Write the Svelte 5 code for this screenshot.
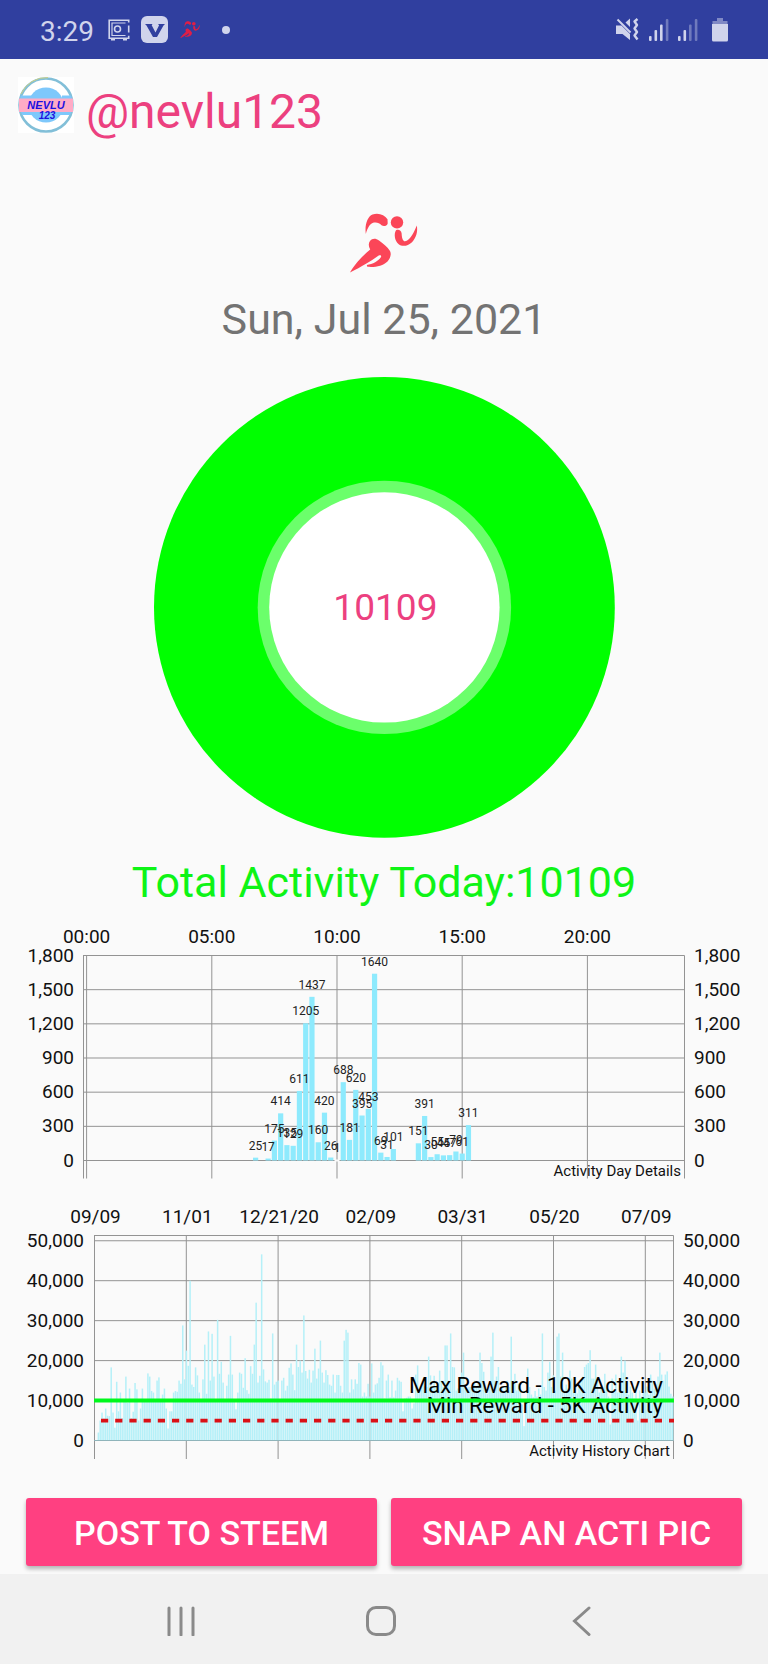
<script>
  // Day chart geometry: one slot is a quarter of an hour
  const dayLeft = 86.6;
  const dayStep = 6.26;
  const dayZero = 240.5;
  const dayY = (v) => dayZero - (v / 1800) * 205;
  const dayBars = [
    [27, 25], [29, 17], [30, 175], [31, 414], [32, 135], [33, 129], [34, 611],
    [35, 1205], [36, 1437], [37, 160], [38, 420], [39, 26], [40, 1], [41, 688],
    [42, 181], [43, 620], [44, 395], [45, 453], [46, 1640], [47, 69], [48, 31],
    [49, 101], [53, 151], [54, 391], [55, 30], [56, 55], [57, 45], [58, 47],
    [59, 79], [60, 61], [61, 311]
  ].map(([slot, value]) => ({ x: dayLeft + slot * dayStep, value }));
  const dayTicks = [0, 300, 600, 900, 1200, 1500, 1800];
  const hours = ['00:00', '05:00', '10:00', '15:00', '20:00'].map((label, i) => ({
    label,
    x: dayLeft + i * 125.2
  }));

  // History chart: thousands of steps for each day
  const histLeft = 94.5;
  const histZero = 240.5;
  const histY = (v) => histZero - v * 3.995;
  const history = [
    2, 5, 7, 5.5, 8, 6.2, 6.1, 18.3, 7, 3.2, 14.7, 7.3, 12, 5.6, 10, 16, 9.5, 13, 5.6, 7.2,
    14.4, 12.8, 5, 8, 13, 10, 10, 16.8, 16, 12.4, 12, 9.8, 15, 15.8, 9.7, 11.5, 13, 8, 3, 7.3,
    7.3, 12, 12.4, 12.2, 15, 14.2, 28.8, 15.3, 22.5, 18.7, 40, 14, 13.4, 18.3, 16.3, 12, 10, 15.3, 24, 11.7,
    27.3, 15, 26.7, 16, 10, 30.2, 16.7, 19.7, 14.5, 10, 13.7, 16.5, 26.2, 16.5, 10, 7.8, 12, 17, 16.7, 13.2,
    20.6, 12.6, 11.7, 18.6, 16.7, 24, 34.5, 14.5, 16.2, 46.6, 17.8, 14.8, 14.5, 15.2, 10.5, 26.8, 14, 14.7, 15, 10,
    15, 15.7, 12.5, 13.7, 18.2, 19.3, 16.5, 12.6, 24, 18.4, 20, 17, 31.3, 17.4, 15.5, 17.7, 14.5, 17.5, 23, 15.5,
    18, 25, 17, 14.5, 17.6, 16.4, 14, 13.7, 16.5, 12, 16.4, 16.4, 13.7, 12, 25, 27.7, 27, 12, 15.3, 12.8,
    15.3, 14.2, 19.4, 19, 11, 12, 11, 14.2, 11, 19.3, 12, 14, 14.3, 15.7, 19.6, 18.8, 10.5, 15, 16.5, 10.8,
    15, 10.8, 12.5, 15.7, 15, 14.7, 7.3, 10.5, 10.7, 11, 11, 8, 9.3, 16.5, 18.8, 12.5, 13.4, 14.6, 12.5, 13.4,
    21, 16.3, 13.4, 16.2, 13.4, 14.2, 17.5, 15, 13.4, 23.8, 23.8, 15, 26.8, 18.4, 18.3, 12.5, 13, 12.5, 17, 22,
    14, 12.5, 13.4, 13.4, 12.5, 15, 13.4, 14.2, 22, 19.4, 17.2, 12.5, 11.7, 13.4, 21, 27, 15, 16, 18.4, 12.5,
    13.4, 12.5, 13.4, 15, 13.4, 26, 13.4, 16.7, 12.5, 14.2, 13.4, 9, 3.6, 10, 18, 13.4, 11.5, 10.8, 12.4, 11,
    13, 11.5, 26.8, 13.4, 12.5, 17, 19.7, 13.4, 16.3, 12.5, 26, 26.8, 16, 22, 12.5, 14, 13, 17.5, 15.5, 12,
    13.5, 11.8, 13.4, 15, 16, 18.4, 19, 19.4, 22.6, 15.5, 15.5, 19, 15, 12, 13.4, 12, 16.7, 13, 11, 4,
    15.5, 12, 16.5, 12, 14, 21, 17, 20, 12.5, 11.5, 13.5, 12, 10.5, 13.5, 5, 12.5, 11, 14, 12, 13.5,
    11.5, 16.5, 15, 13, 14, 16, 22, 16.5, 15, 16.5, 17.3, 13.5, 11.7, 11
  ];
  const histTicks = [0, 10, 20, 30, 40, 50];
  const dates = ['09/09', '11/01', '12/21/20', '02/09', '03/31', '05/20', '07/09'].map((label, i) => ({
    label,
    x: histLeft + i * 91.8
  }));
  const fmt = (n) => n.toLocaleString('en-US');
</script>

{#snippet runner()}
  <svg viewBox="0 0 68 60" fill="currentColor" aria-hidden="true">
    <circle cx="47" cy="9.4" r="6.2" />
    <path d="M15.800 21C14.600 11.500 17.500 3.500 22.500 1.400c6-2 12 .2 15 4.800l.2 4.200c-.8 2.600-4.200 3.400-6.200 1.800-2-2.200-4.700-3.200-7.600-2.600-3.800.8-6.200 5-8.100 11.400z" />
    <path d="M46 17.200c2.600-1.300 5.200.2 5.600 3 .2 3 .4 6.200 2.500 8 3.500.8 8.500-4.700 12.700-15.600 1.200 5.800-.6 12.400-4.800 16.600-4.400 4.300-10.100 4.500-13.300 2-4.300-3.300-4.900-10.800-2.700-14z" />
    <path d="M0 59.500C3 54 8.500 46.500 20.200 36.500c-1.700-3-2-6-.2-8.500 2.200-2.700 5.500-3 9-.5 4.500 3.200 8.400 6.400 11 10.400 1.600 2.800.4 7.600-2.500 10.600-4.700 4.500-12.500 6-20.200 5.300l-.5-1.800c5.800-.8 11.800-4 14.200-8 .6-1.500-.6-2.200-2.300-1.400C20 49 12 53.500 0 59.500z" />
  </svg>
{/snippet}

<div class="screen">
  <header class="status">
    <span class="clock">3:29</span>
    <svg class="safe" viewBox="0 0 22 22" fill="none" stroke="currentColor" aria-hidden="true">
      <path d="M20.700 3.500V1.200H1.200v18h19.500v-2.500M20.700 6.500v7" stroke-width="1.600" />
      <path d="M17.500 4H4v12.500h13.500" stroke-width="1.200" />
      <circle cx="9.500" cy="10" r="3" stroke-width="1.600" />
      <path d="M3 20.500h4M15 20.500h4" stroke-width="1.800" />
    </svg>
    <svg class="badge" viewBox="0 0 27 27" aria-hidden="true">
      <rect width="27" height="27" rx="6" fill="currentColor" />
      <path d="M4 8h7.500l-.8 1.200 3.800 7.300 3.600-7.300L17 8h7l-1.500 1.500L16 21h-4L5.500 9.500z" fill="#303f9f" />
    </svg>
    <span class="mini">{@render runner()}</span>
    <span class="dot"></span>
    <svg class="mute" viewBox="0 0 23 23" fill="currentColor" aria-hidden="true">
      <path d="M0 7.500h5.500l8.500 8.500v6L6.500 16H0z" />
      <path d="M9.500 4.500L14 .5v8.500z" />
      <path d="M1.500 1.500l13 13" stroke="currentColor" stroke-width="2" />
      <path d="M21.500 1L18.500 3.500l2.500 3.500-2.500 3.500 2.500 3.500-2.500 3.500 3 4" fill="none" stroke="currentColor" stroke-width="2.400" stroke-linejoin="round" />
    </svg>
    <svg class="bars" viewBox="0 0 20 22" fill="currentColor" aria-hidden="true">
      <rect y="17" width="2.600" height="5" rx="1" /><rect x="5.500" y="11" width="2.600" height="11" rx="1" />
      <rect x="11" y="5.500" width="2.600" height="16.500" rx="1" /><rect x="16.800" width="2.600" height="22" rx="1" opacity=".4" />
    </svg>
    <svg class="bars" viewBox="0 0 20 22" fill="currentColor" aria-hidden="true">
      <rect y="17" width="2.600" height="5" rx="1" /><rect x="5.500" y="11" width="2.600" height="11" rx="1" />
      <rect x="11" y="5.500" width="2.600" height="16.500" rx="1" opacity=".4" /><rect x="16.800" width="2.600" height="22" rx="1" opacity=".4" />
    </svg>
    <svg class="battery" viewBox="0 0 16 24" fill="currentColor" aria-hidden="true">
      <path d="M5 0h6v3h4.500v3H.5V3H5z" opacity=".5" />
      <path d="M0 6h16v16q0 1.500-1.500 1.500h-13Q0 23.500 0 22z" />
    </svg>
  </header>

  <main>
    <div class="user">
      <svg class="avatar" viewBox="0 0 56 56" aria-label="NEVLU 123">
        <rect width="56" height="56" fill="#fff" />
        <circle cx="28" cy="28" r="26.500" fill="#fff" stroke="#82bfd8" stroke-width="2.600" />
        <path d="M3 17A27.500 27.500 0 0 1 30 .6" fill="none" stroke="#c9cf86" stroke-width="1" />
        <circle cx="28" cy="28" r="17.600" fill="#7ec8fb" />
        <path d="M3 18.500h11.500L12 22H2zM44 18.500h9L54 22H44zM2.500 34.500h11l2.500 3.500H4.500zM42 34.500h11.500L52 38H40z" fill="#7ec8fb" />
        <rect x="1" y="21.500" width="54" height="13.500" fill="#ffabc6" />
        <text x="28" y="32" class="logo">NEVLU</text>
        <text x="29" y="42" class="logo small">123</text>
      </svg>
      <span class="handle">@nevlu123</span>
    </div>

    <div class="runner">{@render runner()}</div>
    <div class="date">Sun, Jul 25, 2021</div>

    <svg class="donut" viewBox="0 0 460 460" role="img" aria-label="10109 steps">
      <circle cx="230" cy="230" r="230" fill="#0f0" />
      <circle cx="230" cy="230" r="126.500" fill="#fff" fill-opacity=".42" />
      <circle cx="230" cy="230" r="115" fill="#fff" />
      <text x="231" y="243">10109</text>
    </svg>

    <div class="total">Total Activity Today:10109</div>

    <svg class="chart" viewBox="0 0 768 270" role="img" aria-label="Activity Day Details">
      <g class="grid">
        {#each dayTicks as t}
          <path d="M83 {dayY(t)}H684.500" />
        {/each}
        {#each hours as h}
          <path d="M{h.x} 35.500V258.500" />
        {/each}
        <path d="M83.500 35.500V258.500M684.500 35.500V258.500" />
      </g>
      {#each dayBars as b}
        {#if b.value === 1}
          <rect x={b.x - 2.500} y="239.500" width="5" height="2" fill="#fafafa" />
        {:else}
          <rect x={b.x - 2.600} y={dayY(b.value)} width="5.200" height={dayZero - dayY(b.value)} fill="#8eeafd" />
        {/if}
      {/each}
      <g class="values">
        {#each dayBars as b}
          <text x={b.x} y={dayY(b.value) - 8}>{b.value}</text>
        {/each}
      </g>
      <g class="axis">
        {#each hours as h}
          <text x={h.x} y="23" class="mid">{h.label}</text>
        {/each}
        {#each dayTicks as t}
          <text x="74" y={dayY(t) + 6} class="end">{fmt(t)}</text>
          <text x="694" y={dayY(t) + 6}>{fmt(t)}</text>
        {/each}
      </g>
      <text x="681" y="256" class="caption">Activity Day Details</text>
    </svg>

    <svg class="chart" viewBox="0 0 768 270" role="img" aria-label="Activity History Chart">
      <g class="grid">
        {#each histTicks as t}
          <path d="M94 {histY(t)}H673.500" />
        {/each}
        {#each dates as d}
          <path d="M{d.x} 35.500V259" />
        {/each}
        <path d="M94 35.500H673.500V259" />
      </g>
      {#each history as v, i}
        <rect x={97.600 + i * 1.835} y={histY(v)} width="1.500" height={v * 3.995} fill="#b5f0f8" />
      {/each}
      <path d="M94 240.500H673.500" stroke="#8fb4ba" />
      <g class="limits">
        <text x="663" y="193">Max Reward - 10K Activity</text>
        <text x="663" y="213">Min Reward - 5K Activity</text>
      </g>
      <path d="M94 200.600H674" stroke="#00f81c" stroke-width="4" />
      <path d="M101 220.600H674" stroke="#db1016" stroke-width="3.600" stroke-dasharray="7.200 7" />
      <g class="axis">
        {#each dates as d}
          <text x={d.x + 1} y="23" class="mid">{d.label}</text>
        {/each}
        {#each histTicks as t}
          <text x="84" y={histY(t) + 6} class="end">{fmt(t * 1000)}</text>
          <text x="683" y={histY(t) + 6}>{fmt(t * 1000)}</text>
        {/each}
      </g>
      <text x="670" y="256" class="caption">Activity History Chart</text>
    </svg>

    <div class="actions">
      <button>POST TO STEEM</button>
      <button>SNAP AN ACTI PIC</button>
    </div>
  </main>

  <nav>
    <button aria-label="Recent apps">
      <svg viewBox="0 0 30 30"><path d="M3 2v27M15 2v27M27 2v27" /></svg>
    </button>
    <button aria-label="Home">
      <svg viewBox="0 0 30 30"><rect x="1.500" y="1.500" width="27" height="27" rx="8.500" /></svg>
    </button>
    <button aria-label="Back">
      <svg viewBox="0 0 30 30"><path d="M23 2L8.500 15 23 28.500" /></svg>
    </button>
  </nav>
</div>

<style>
  :global(body) {
    margin: 0;
    background: #fafafa;
  }
  .screen {
    display: flex;
    flex-direction: column;
    min-height: 100vh;
    background: #fafafa;
    font-family: Roboto, sans-serif;
  }
  svg {
    display: block;
    flex: none;
  }
  .status {
    display: flex;
    align-items: center;
    height: 59px;
    padding: 0 40px;
    background: #303f9f;
    color: #d0d4ec;
  }
  .clock {
    font-size: 28px;
    line-height: 32px;
    padding-top: 4px;
  }
  .safe {
    width: 22px;
    height: 22px;
    margin-left: 14px;
  }
  .badge {
    width: 27px;
    height: 27px;
    margin-left: 11px;
  }
  .mini {
    width: 20px;
    margin-left: 12px;
    color: #e01e46;
  }
  .dot {
    width: 8px;
    height: 8px;
    margin-left: 22px;
    border-radius: 50%;
    background: currentColor;
  }
  .mute {
    width: 23px;
    height: 23px;
    margin-left: auto;
  }
  .bars {
    width: 20px;
    height: 22px;
    margin-left: 9px;
  }
  .mute + .bars {
    margin-left: 10px;
  }
  .battery {
    width: 16px;
    height: 24px;
    margin-left: 14px;
  }
  main {
    display: flex;
    flex-direction: column;
    align-items: center;
  }
  .user {
    display: flex;
    align-self: stretch;
    gap: 12px;
    padding: 18px 18px 0;
  }
  .avatar {
    width: 56px;
    height: 56px;
  }
  .logo {
    font: italic bold 11px 'Liberation Sans', sans-serif;
    fill: #1c10e0;
    text-anchor: middle;
  }
  .small {
    font-size: 10px;
  }
  .handle {
    font-size: 48px;
    line-height: 70px;
    color: #ec407f;
  }
  .runner {
    width: 68px;
    margin-top: 66px;
    color: #fb4658;
  }
  .date,
  .total {
    font-size: 43px;
    line-height: 52px;
    text-align: center;
  }
  .date {
    margin-top: 20px;
    color: #737373;
  }
  .donut {
    width: 60%;
    margin-top: 32px;
    overflow: visible;
  }
  .donut text {
    font-size: 37px;
    fill: #ec407f;
    text-anchor: middle;
  }
  .total {
    margin-top: 18px;
    color: #0ef416;
  }
  .chart {
    width: 100%;
    margin-top: 10px;
  }
  .total + .chart {
    margin-top: 12px;
  }
  .grid path {
    fill: none;
    stroke: #939393;
    stroke-width: 1;
  }
  .axis text {
    font-size: 19px;
    fill: #111;
  }
  .axis .mid,
  .values text {
    text-anchor: middle;
  }
  .axis .end,
  .caption,
  .limits text {
    text-anchor: end;
  }
  .values text {
    font-size: 12px;
    fill: #222;
  }
  .caption {
    font-size: 15px;
    fill: #111;
  }
  .limits text {
    font-size: 22px;
    fill: #000;
  }
  .actions {
    display: grid;
    grid-template-columns: 1fr 1fr;
    gap: 14px;
    align-self: stretch;
    padding: 28px 26px 8px;
  }
  .actions button {
    height: 68px;
    padding: 2px 0 0;
    border: 0;
    border-radius: 3px;
    background: #ff4081;
    box-shadow: 0 3px 4px rgba(0, 0, 0, 0.28);
    color: #fff;
    font: 500 34px/40px Roboto, sans-serif;
    white-space: nowrap;
  }
  nav {
    display: grid;
    grid-template-columns: repeat(3, 1fr);
    height: 90px;
    margin-top: auto;
    padding: 0 87px 0 81px;
    background: #f1f1f1;
  }
  nav button {
    display: grid;
    place-items: center;
    padding: 4px 0 0;
    border: 0;
    background: none;
  }
  nav svg {
    width: 30px;
    height: 30px;
    fill: none;
    stroke: #8a8a8a;
    stroke-width: 3;
    stroke-linecap: round;
  }
</style>
